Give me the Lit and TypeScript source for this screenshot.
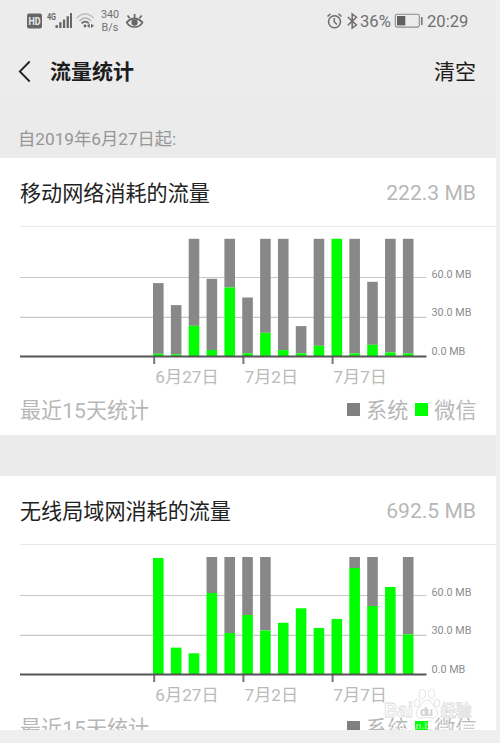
import { LitElement, html, css, svg } from "lit";
import { customElement, property } from "lit/decorators.js";

type Bar = [total: number, app: number];

const MOBILE: Bar[] = [
  [73.2, 2.5], [51.2, 2], [117.5, 30.5], [77.5, 6.3], [117.5, 68.8],
  [58.8, 3], [117.5, 23.5], [117.5, 6.2], [30.2, 3], [117.5, 10.5],
  [117.5, 117.5], [117.5, 2.8], [74.5, 11.5], [117.5, 3.8], [117.5, 2.8],
];
const WIFI: Bar[] = [
  [116.3, 116.3], [26.7, 26.7], [21, 21], [117.3, 81.3], [117.3, 41.3],
  [117.3, 59.3], [117.3, 43.8], [51.5, 51.5], [66, 66], [46.3, 46.3],
  [55.3, 55.3], [117.3, 106.3], [117.3, 68.3], [87.3, 87.3], [117.3, 40],
];

@customElement("traffic-chart")
class TrafficChart extends LitElement {
  @property({ attribute: false }) bars: Bar[] = [];
  static styles = css`
    :host { display: block; height: 164px; }
    svg { display: block; }
    .grid { stroke: #c8c8c8; stroke-width: 1.2; }
    .axis { stroke: #555; stroke-width: 1.8; }
    .tick { stroke: #777; stroke-width: 2; }
    .total { fill: #888; }
    .app { fill: #0f0; }
    text { font-family: Roboto, "Noto Sans CJK SC", sans-serif; }
    .scale { font-size: 10.8px; fill: #8c8c8c; }
    .date { font-size: 17.2px; fill: #bababa; }
  `;
  render() {
    const base = 129.3;
    return html`<svg width="496" height="164" viewBox="0 0 496 164">
      <path class="grid" d="M20 50.5H426.5M20 90.3H426.5" />
      ${this.bars.map(([total, app], i) => {
        const x = 153 + i * 17.85;
        return svg`
          <rect class="total" x=${x} y=${base - total} width="10.6" height=${total - app}></rect>
          <rect class="app" x=${x} y=${base - app} width="10.6" height=${app}></rect>`;
      })}
      <path class="tick" d="M154.2 130V137M243.4 130V137M332.6 130V137" />
      <path class="axis" d="M20 129.5H426.5" />
      <text class="scale" x="431.5" y="51">60.0 MB</text>
      <text class="scale" x="431.5" y="89.2">30.0 MB</text>
      <text class="scale" x="431.5" y="127.7">0.0 MB</text>
      <text class="date" x="155.3" y="156">6月27日</text>
      <text class="date" x="244.5" y="156">7月2日</text>
      <text class="date" x="333.3" y="156">7月7日</text>
    </svg>`;
  }
}

@customElement("traffic-card")
class TrafficCard extends LitElement {
  @property() name = "";
  @property() amount = "";
  @property({ attribute: false }) bars: Bar[] = [];
  static styles = css`
    :host {
      display: block; height: 277px; box-sizing: border-box; background: #fff;
      font: 21.1px/30px Roboto, "Noto Sans CJK SC", sans-serif;
    }
    .head {
      display: flex; justify-content: space-between; align-items: center; box-sizing: border-box;
      height: 69px; margin-left: 20px; padding: 3px 20px 0 0;
      border-bottom: 1px solid #e8e8e8; color: #222;
    }
    .amount, .foot { color: #b7b7b7; }
    .amount { padding-bottom: 2px; }
    .foot { display: flex; align-items: center; height: 30px; padding: 5px 19.5px 0 20px; }
    .since { flex: 1; }
    .key { width: 12.5px; height: 12.5px; margin: -3px 6.5px 0 0; background: #808080; }
    .key.green { background: #0f0; margin-left: 7px; }
  `;
  render() {
    return html`
      <div class="head"><span>${this.name}</span><span class="amount">${this.amount}</span></div>
      <traffic-chart .bars=${this.bars}></traffic-chart>
      <div class="foot">
        <span class="since">最近15天统计</span>
        <i class="key"></i><span>系统</span>
        <i class="key green"></i><span>微信</span>
      </div>`;
  }
}

@customElement("app-root")
class AppRoot extends LitElement {
  static styles = css`
    :host {
      display: block; position: relative; width: 500px; height: 743px; overflow: hidden;
      background: #efefef; font-family: Roboto, "Noto Sans CJK SC", sans-serif;
    }
    .screen { width: 496px; height: 730px; overflow: hidden; background: #ebebeb; }
    .status { display: flex; height: 42px; background: #ececec; color: #707070; }
    .status svg { display: block; }
    .rate { width: 20px; margin-left: 0; padding-top: 9px; font-size: 10.8px; line-height: 12.6px; text-align: center; }
    .left { width: 100px; }
    .eye { width: 30px; }
    .right { margin-left: 175px; }
    .level, .clock { font-size: 16.6px; line-height: 42px; padding-top: 1px; }
    .level { width: 33px; margin-left: -1px; }
    .clock { margin-left: 2px; }
    .bar {
      display: flex; align-items: center; height: 58px; padding: 2px 20px 0; box-sizing: border-box;
      background: #ececec; color: #1c1c1c; font-size: 21px; line-height: 30px;
      border-bottom: 1px solid #e8e8e8;
    }
    .back { width: 30px; height: 24px; }
    .title { flex: 1; font-weight: 700; }
    .from { height: 58px; padding: 26px 18px 0; box-sizing: border-box; color: #969696; font-size: 17.25px; line-height: 26px; }
    .gap { height: 41px; }
    .mark { position: absolute; left: 380px; top: 684px; }
    .mark text { font-family: "Liberation Sans", "Noto Sans CJK SC", sans-serif; font-weight: 700; }
  `;
  render() {
    return html`
      <div class="screen">
        <div class="status">
          <svg class="left" width="100" height="42" viewBox="0 0 100 42" fill="#666">
            <rect x="27" y="13.5" width="15" height="15" rx="2" />
            <text x="28.6" y="24.7" font-size="10" font-weight="700" fill="#ececec" textLength="12" lengthAdjust="spacingAndGlyphs">HD</text>
            <text x="47" y="20" font-size="9" font-weight="700" textLength="9" lengthAdjust="spacingAndGlyphs">4G</text>
            <path d="M55.5 25h2.3v3h-2.3zM59.2 22.3h2.3V28h-2.3zM62.9 19.5h2.3V28h-2.3zM66.6 16.3h2.3V28h-2.3zM70 13h2v15h-2z" />
            <g fill="none" stroke-width="1.6">
              <path d="M76.7 18.2Q85.2 9.6 93.8 18.2" stroke="#c2c2c2" />
              <path d="M79.4 21Q85.2 15 91 21" stroke="#b4b4b4" />
              <path d="M81.6 23.4Q85.2 19.8 88.8 23.4" stroke="#666" stroke-width="1.8" />
            </g>
            <circle cx="85" cy="26" r="1.4" />
            <path d="M86.8 25.8l3-2.1v4.2zM94 25.8l-3-2.1v4.2z" />
          </svg>
          <div class="rate">340<br />B/s</div>
          <svg class="eye" width="30" height="42" viewBox="120 0 30 42" fill="none" stroke="#666" stroke-width="1.7">
            <path d="M126.7 22.3Q134.6 14.5 142.5 22.3Q140 27 134.6 27Q129.2 27 126.7 22.3ZM134.6 17.5V14M129.8 18.3L127.5 15.5M139.4 18.3L141.7 15.5" />
            <circle cx="134.6" cy="22.5" r="2.3" fill="#666" />
          </svg>
          <svg class="right" width="36" height="42" viewBox="325 0 36 42" fill="none" stroke="#6c6c6c" stroke-width="1.5">
            <circle cx="334.5" cy="21.7" r="6" />
            <path d="M334.3 18V22L337 24.5M327.5 16.5L330.5 13.8M338.5 13.8L341.5 16.5" />
            <path d="M347.8 17L356.4 25L352.2 28V14L356.4 17.2L347.8 25.2" />
          </svg>
          <span class="level">36%</span>
          <svg width="32" height="42" viewBox="393 0 32 42">
            <rect x="395.3" y="14.3" width="24" height="12.8" rx="1.8" fill="none" stroke="#8a8a8a" stroke-width="1.1" />
            <rect x="397" y="16" width="8.3" height="9.4" fill="#606060" />
            <rect x="421" y="17" width="1.6" height="8" fill="#777" />
          </svg>
          <span class="clock">20:29</span>
        </div>
        <div class="bar">
          <svg class="back" viewBox="20 0 30 24" overflow="visible"><path d="M29.7 1.5L19.8 11.5L29.7 21.5" fill="none" stroke="#222" stroke-width="1.8" /></svg>
          <span class="title">流量统计</span><span>清空</span>
        </div>
        <div class="from">自2019年6月27日起:</div>
        <traffic-card name="移动网络消耗的流量" amount="222.3 MB" .bars=${MOBILE}></traffic-card>
        <div class="gap"></div>
        <traffic-card name="无线局域网消耗的流量" amount="692.5 MB" .bars=${WIFI}></traffic-card>
      </div>
      <svg class="mark" width="100" height="46" viewBox="380 684 100 46">
        <g fill="#fff" fill-opacity=".7" stroke="#dcdcdc" stroke-width=".8">
          <text x="384" y="717" font-size="20.5" textLength="29" lengthAdjust="spacingAndGlyphs">Bai</text>
          <ellipse cx="417" cy="703" rx="2.8" ry="4" />
          <ellipse cx="422.3" cy="694" rx="3.2" ry="4.6" />
          <ellipse cx="431.5" cy="694" rx="3.2" ry="4.6" />
          <ellipse cx="437" cy="703" rx="2.8" ry="4" />
          <path d="M427 700C432 700 432 705 435 708C440 713 437 719 431 718Q427 717 423 718C416 719 414 713 419 708C422 705 422 700 427 700Z" />
          <text x="440.5" y="716" font-size="15.5" textLength="31">经验</text>
        </g>
        <text x="420" y="715.5" font-size="12" fill="#d0d0d0" textLength="13">du</text>
        <text x="387" y="728.5" font-size="9.5" fill="#fff" fill-opacity=".6" textLength="86">jingyan.baidu.com</text>
      </svg>`;
  }
}
